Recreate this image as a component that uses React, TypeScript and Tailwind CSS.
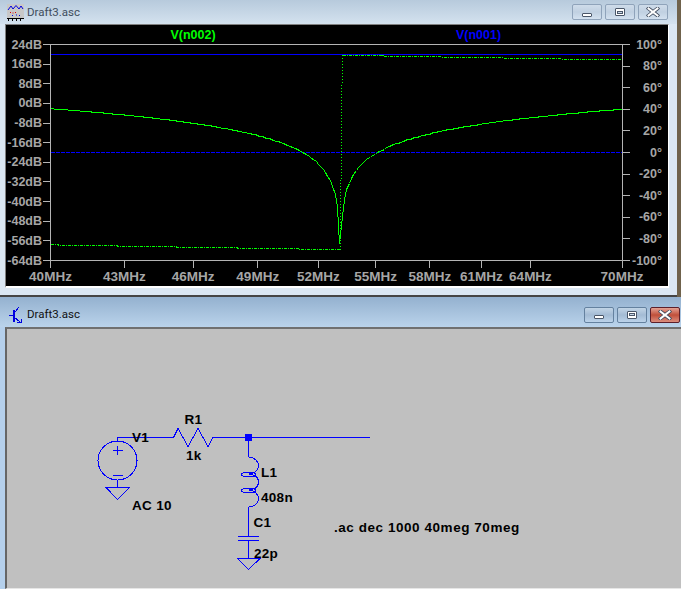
const FONT = "font-['Liberation_Sans',Arial,sans-serif] font-bold";
const dbLabels = ['24dB', '16dB', '8dB', '0dB', '-8dB', '-16dB', '-24dB', '-32dB', '-40dB', '-48dB', '-56dB', '-64dB'];
const degLabels = ['100°', '80°', '60°', '40°', '20°', '0°', '-20°', '-40°', '-60°', '-80°', '-100°'];
const freqs = [40, 43, 46, 49, 52, 55, 58, 61, 64, 70];

const fx = (f: number) => 50.5 + (571.5 * Math.log(f / 40)) / Math.log(70 / 40);
const dbY = (d: number) => 44.5 + ((24 - d) * 216) / 88;
const degY = (d: number) => 44.5 + ((100 - d) * 216) / 200;

function curves() {
  const L = 408e-9;
  const C = 22e-12;
  const R = 1000;
  const mag: string[] = [];
  const below: string[] = [];
  const above: string[] = [];
  for (let k = 0; k <= 243; k++) {
    const f = 40e6 * Math.pow(10, k / 1000);
    const w = 2 * Math.PI * f;
    const X = w * L - 1 / (w * C);
    const v = (10 * Math.abs(X)) / Math.sqrt(R * R + X * X);
    const db = 20 * Math.log10(v);
    const deg = (X > 0 ? 90 : -90) - (Math.atan(X / R) * 180) / Math.PI;
    const x = Math.round(fx(f / 1e6) - 0.5) + 0.5;
    mag.push(`${x},${Math.round(dbY(db) - 0.5) + 0.5}`);
    (X > 0 ? above : below).push(`${x},${Math.round(degY(deg) - 0.5) + 0.5}`);
  }
  return { mag: mag.join(' '), below: below.join(' '), above: above.join(' ') };
}

function Plot() {
  const { mag, below, above } = curves();
  const gray = '#b4b4b4';
  const text = '#a6a6a6';
  return (
    <svg width={662} height={261} viewBox="6 25 662 261" className={`block bg-black ${FONT} text-[12.5px]`}>
      <text x={193} y={38.5} textAnchor="middle" fill="#00ff00">V(n002)</text>
      <text x={478.5} y={38.5} textAnchor="middle" fill="#0000ff">V(n001)</text>
      <g shapeRendering="crispEdges" stroke={gray} fill="none">
        <rect x={50.5} y={44.5} width={572} height={216} />
        {dbLabels.map((_, i) => {
          const y = Math.round(dbY(24 - i * 8) - 0.5) + 0.5;
          return <line key={i} x1={43} x2={50} y1={y} y2={y} />;
        })}
        {degLabels.map((_, i) => {
          const y = Math.round(degY(100 - i * 20) - 0.5) + 0.5;
          return <line key={i} x1={623} x2={630} y1={y} y2={y} />;
        })}
        {freqs.map((f) => {
          const x = Math.round(fx(f) - 0.5) + 0.5;
          return <line key={f} x1={x} x2={x} y1={261} y2={268} />;
        })}
      </g>
      {dbLabels.map((l, i) => (
        <text key={l} x={42} y={dbY(24 - i * 8) + 4} textAnchor="end" fill={text}>{l}</text>
      ))}
      {degLabels.map((l, i) => (
        <text key={l} x={662} y={degY(100 - i * 20) + 4} textAnchor="end" fill={text}>{l}</text>
      ))}
      {freqs.map((f) => (
        <text key={f} x={fx(f)} y={280.5} textAnchor="middle" fill={text} className="text-[13.5px]">{f}MHz</text>
      ))}
      <g shapeRendering="crispEdges" fill="none" strokeWidth={1}>
        <line x1={51} x2={622} y1={54.5} y2={54.5} stroke="#0000ff" />
        <line x1={51} x2={622} y1={152.5} y2={152.5} stroke="#0000ff" strokeDasharray="4 1" />
        <polyline points={mag} stroke="#00ff00" />
        <polyline points={below} stroke="#00ff00" strokeDasharray="3 1 1 1" />
        <polyline points={above} stroke="#00ff00" strokeDasharray="3 1 1 1" />
        <path d="M342.5 55V85M341.5 85V180M340.5 180V250" stroke="#00ff00" strokeDasharray="1 2" />
      </g>
    </svg>
  );
}

function Schematic() {
  const blue = '#0000ff';
  return (
    <svg width={674} height={259} viewBox="7 329 674 259" className={`block ${FONT} text-[13.5px] tracking-[0.3px]`}>
      <g fill="none" stroke={blue} shapeRendering="crispEdges">
        <polyline points="117.5,441 117.5,437.5 173.5,437.5 178,428.5 188,446.5 198,428.5 208,446.5 213,437.5 369.5,437.5" />
        <circle cx={117.5} cy={460.5} r={19.5} />
        <path d="M113 450.5H123M117.5 446V455M113 475.5H123" />
        <path d="M117.5 480V487.5M106 487.5H129.5L117.5 499.5Z" />
        <path d="M248.5 437.5V457" />
        <path d="M248.5 457C254 457 258.5 461 258.5 465.5C258.5 470.5 254 474 248.5 474" />
        <path d="M248.5 474C254 474 258.5 477 258.5 482C258.5 487 254 490 248.5 490" />
        <path d="M248.5 490C254 490 258.5 494 258.5 498.5C258.5 503.5 254 507 248.5 507" />
        <ellipse cx={248.5} cy={474.5} rx={7} ry={2.5} />
        <ellipse cx={248.5} cy={490.5} rx={7} ry={2.5} />
        <path d="M248.5 507V536M238 536.5H259M238 540.5H259M248.5 541V558" />
        <path d="M237.5 558.5H260L248.5 569.5Z" />
      </g>
      <rect x={245} y={434} width={7} height={7} fill={blue} />
      <g fill="#000000">
        <text x={132} y={442}>V1</text>
        <text x={184.5} y={424}>R1</text>
        <text x={186} y={460}>1k</text>
        <text x={261} y={477}>L1</text>
        <text x={261} y={502}>408n</text>
        <text x={253.5} y={527}>C1</text>
        <text x={254} y={558}>22p</text>
        <text x={132} y={510}>AC 10</text>
        <text x={334} y={532} className="tracking-[0.55px]">.ac dec 1000 40meg 70meg</text>
      </g>
    </svg>
  );
}

function GlyphMin() {
  return <span className="mt-[5px] block h-[4px] w-[10px] rounded-[1px] border border-[#4a5668] bg-white" />;
}
function GlyphMax() {
  return (
    <span className="flex h-[8px] w-[10px] items-center justify-center rounded-[1px] border border-[#4a5668] bg-white">
      <span className="block h-[3px] w-[6px] border border-[#4a5668] bg-[#c9d8e8]" />
    </span>
  );
}
function GlyphClose() {
  return (
    <svg width={14} height={10} viewBox="0 0 14 10" className="block">
      <path d="M2.5 1.5L11.5 8.5M11.5 1.5L2.5 8.5" stroke="#3f4a5c" strokeWidth={3.6} strokeLinecap="square" />
      <path d="M2.5 1.5L11.5 8.5M11.5 1.5L2.5 8.5" stroke="#ffffff" strokeWidth={2} strokeLinecap="square" />
    </svg>
  );
}

function CaptionButton({ kind, tone }: { kind: 'min' | 'max' | 'close'; tone: 'inactive' | 'active' | 'red' }) {
  const cls =
    tone === 'inactive'
      ? 'border-[#8fa3ba] bg-gradient-to-b from-[#cfdcea] via-[#c0d0e1] to-[#d3e1ef]'
      : tone === 'active'
        ? 'border-[#64819f] bg-gradient-to-b from-[#c2d4e6] via-[#a3bbd4] to-[#bcd3ea]'
        : 'border-[#5c1f2a] bg-gradient-to-b from-[#e3a194] via-[#c04f3a] to-[#db8d7e]';
  return (
    <div className={`flex h-[16px] w-[30px] items-center justify-center rounded-[2px] border ${cls}`}>
      {kind === 'min' && <GlyphMin />}
      {kind === 'max' && <GlyphMax />}
      {kind === 'close' && <GlyphClose />}
    </div>
  );
}

function WaveIcon() {
  return (
    <svg width={17} height={17} viewBox="0 0 17 17" className="block shrink-0">
      <rect x={0} y={0} width={17} height={14} fill="#c8c8c8" />
      <polyline points="1,6 4,2 6,5 9,1.5 12,5 14,2 16,5" fill="none" stroke="#0000e0" />
      <path d="M3 8.5H4M5.5 9H6.5M8 8.5H9" stroke="#e00000" />
      <path d="M5 11.5H6M9 11H10M12 11.5H13" stroke="#0000e0" />
      <path d="M0 14.5H17" stroke="#000" />
      <path d="M1.5 15V17M5.5 15V17M9.5 15V17M13.5 15V17" stroke="#000" />
    </svg>
  );
}

function TransistorIcon() {
  return (
    <svg width={14} height={18} viewBox="0 0 14 18" className="block shrink-0" fill="none" stroke="#0000e0" shapeRendering="crispEdges">
      <path d="M4.5 3.5V15.5" strokeWidth={2} />
      <path d="M0 9.5H4M5 7.5L10 1M5 11L11 16" />
      <path d="M8 16.5H12.5V13" />
    </svg>
  );
}

export default function App() {
  return (
    <div className="flex h-[589px] w-[681px] flex-col overflow-hidden bg-[#b5d0ec]">
      <div className="flex h-[297px] shrink-0 bg-[#6f624c]">
        <div className="flex w-[677px] flex-col border-b-2 border-[#454545] bg-[#dbe7f3]">
          <div className="flex h-[24px] shrink-0 items-center bg-gradient-to-b from-[#b7cadc] to-[#d4e2ef] pl-[7px] pr-[9px]">
            <WaveIcon />
            <span className="ml-[3px] mt-[2px] font-['Roboto',sans-serif] text-[11.5px] text-[#3f4d5c]">Draft3.asc</span>
            <div className="ml-auto flex gap-[3px]">
              <CaptionButton kind="min" tone="inactive" />
              <CaptionButton kind="max" tone="inactive" />
              <CaptionButton kind="close" tone="inactive" />
            </div>
          </div>
          <div className="ml-[5px] mr-[8px] w-[664px] border-l border-r border-t border-b-2 border-l-[#808080] border-t-[#808080] border-r-white border-b-white">
            <Plot />
          </div>
        </div>
      </div>
      <div className="flex min-h-0 flex-1 flex-col">
        <div className="flex h-[30px] shrink-0 items-center bg-gradient-to-b from-[#94b1cf] to-[#bad3eb] pl-[9px] pr-[1px] pt-[5px]">
          <TransistorIcon />
          <span className="ml-[4px] font-['Roboto',sans-serif] text-[11.5px] text-[#101010]">Draft3.asc</span>
          <div className="ml-auto flex gap-[3px]">
            <CaptionButton kind="min" tone="active" />
            <CaptionButton kind="max" tone="active" />
            <CaptionButton kind="close" tone="red" />
          </div>
        </div>
        <div className="ml-[5px] flex-1 border-l-2 border-t-2 border-b border-l-[#666666] border-t-[#707070] border-b-[#e6e6e6] bg-[#c0c0c0]">
          <Schematic />
        </div>
      </div>
    </div>
  );
}
